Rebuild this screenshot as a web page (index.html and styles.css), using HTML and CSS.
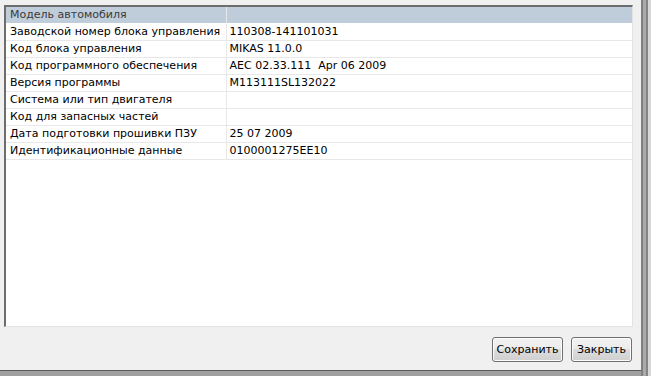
FILE: index.html
```html
<!DOCTYPE html>
<html>
<head>
<meta charset="utf-8">
<link rel="stylesheet" href="styles.css">
</head>
<body>
<div class="window">
  <div class="client">
    <div class="table-box">
      <table class="grid">
        <tr class="head"><td class="c1">Модель автомобиля</td><td class="c2"></td></tr>
        <tr><td class="c1">Заводской номер блока управления</td><td class="c2">110308-141101031</td></tr>
        <tr><td class="c1">Код блока управления</td><td class="c2">MIKAS 11.0.0</td></tr>
        <tr><td class="c1">Код программного обеспечения</td><td class="c2">AEC 02.33.111&nbsp;&nbsp;Apr 06 2009</td></tr>
        <tr><td class="c1">Версия программы</td><td class="c2">M113111SL132022</td></tr>
        <tr><td class="c1">Система или тип двигателя</td><td class="c2"></td></tr>
        <tr><td class="c1">Код для запасных частей</td><td class="c2"></td></tr>
        <tr><td class="c1">Дата подготовки прошивки ПЗУ</td><td class="c2">25 07 2009</td></tr>
        <tr><td class="c1">Идентификационные данные</td><td class="c2">0100001275EE10</td></tr>
      </table>
    </div>
    <div class="buttons">
      <button class="btn btn-save">Сохранить</button>
      <button class="btn btn-close">Закрыть</button>
    </div>
  </div>
  <div class="frame-right"></div>
</div>
<div class="frame-bottom"></div>
</body>
</html>
```
FILE: styles.css
```css
html, body {
  margin: 0;
  padding: 0;
  background: #f0f0f0;
  width: 651px;
  height: 376px;
  overflow: hidden;
}
.window {
  display: flex;
  height: 370px;
}
.client {
  width: 641px;
  display: flex;
  flex-direction: column;
  padding: 5px 0 0 4px;
  box-sizing: border-box;
}
.table-box {
  width: 629px;
  height: 322px;
  box-sizing: border-box;
  background: #ffffff;
  border-top: 2px solid #6d6d6d;
  border-left: 2px solid #6d6d6d;
  border-right: 1px solid #e3e3e3;
  border-bottom: 1px solid #e3e3e3;
  overflow: hidden;
}
.grid {
  border-collapse: collapse;
  width: 100%;
  font-family: "DejaVu Sans", sans-serif;
  font-size: 11px;
  color: #000;
}
.grid td {
  height: 16px;
  padding: 0 0 0 4px;
  line-height: 16px;
  border-bottom: 1px solid #e8e8e8;
  white-space: nowrap;
  box-sizing: border-box;
}
.grid .c1 {
  width: 220px;
  border-right: 1px solid #e8e8e8;
}
.grid .c2 {
  padding-left: 3px;
}
.grid .head td {
  background: #bfcdda;
  color: #3a3a3a;
  border-bottom: 1px solid #ffffff;
  border-right-color: #e2e8ee;
}
.buttons {
  display: flex;
  justify-content: flex-end;
  gap: 8px;
  margin-top: 10px;
  padding-right: 9px;
}
.btn {
  height: 25px;
  box-sizing: border-box;
  border: 1px solid #707070;
  border-radius: 3px;
  box-shadow: inset 0 0 0 1px #fcfcfc;
  background: linear-gradient(#f2f2f2 0%, #ebebeb 50%, #dddddd 50%, #cfcfcf 100%);
  font-family: "DejaVu Sans", sans-serif;
  font-size: 11px;
  color: #000;
  padding: 0;
}
.btn-save { width: 71px; }
.btn-close { width: 61px; }
.frame-right {
  width: 10px;
  height: 376px;
  background: linear-gradient(to right, #7f7f7f 0, #7f7f7f 2px, #aaaaaa 2px, #aaaaaa 5px, #858585 5px, #858585 7px, #d8d8d8 7px);
}
.frame-bottom {
  height: 6px;
  border-top: 1px solid #5a5a5a;
  background: #a0a0a0;
  box-sizing: border-box;
  width: 641px;
}
```
